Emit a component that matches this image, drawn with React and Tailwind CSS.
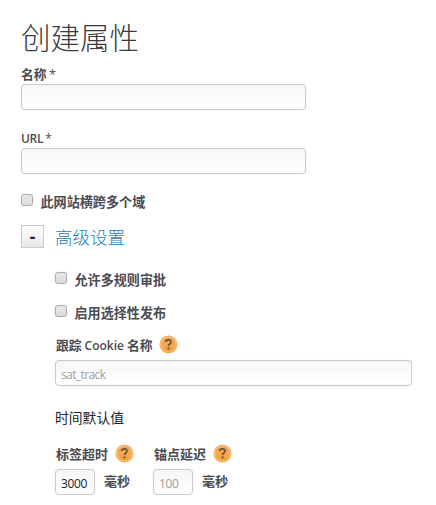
import React from 'react';

const field =
  'block h-[26px] rounded-[4px] border border-[#cbcbcb] bg-linear-to-b from-[#f6f6f6] to-white outline-none shadow-[0_0_1px_#d4d4d4] text-[12px] placeholder:text-[#a0a0a0] placeholder:opacity-100';

function Checkbox({ label, className = '' }) {
  return (
    <label className={`flex h-4 items-center ${className}`}>
      <input
        type="checkbox"
        className="size-3 appearance-none rounded-[3px] border border-[#adadad] bg-linear-to-b from-[#e8e8e8] to-[#dcdcdc] shadow-[0_0_1px_#b5b5b5]"
      />
      <span className="relative top-[2px] ml-[7.5px] text-[13.1px] leading-4 font-bold">{label}</span>
    </label>
  );
}

function Help() {
  return (
    <svg className="size-[19px] shrink-0" viewBox="0 0 19 19" role="img">
      <defs>
        <linearGradient id="amber" x1="0" y1="0" x2="0" y2="1">
          <stop offset="0" stopColor="#e9a257" />
          <stop offset="0.55" stopColor="#f3a850" />
          <stop offset="1" stopColor="#f59b28" />
        </linearGradient>
      </defs>
      <circle cx="9.5" cy="9.5" r="9" fill="url(#amber)" />
      <circle cx="9.5" cy="9.5" r="7.7" fill="none" stroke="#fbd196" strokeWidth="0.9" />
      <path d="M6.7 7C6.8 5.4 7.9 4.8 9.4 4.8c1.6 0 2.6.8 2.6 2.2 0 2-2.5 2-2.5 4.1" fill="none" stroke="#6b5134" strokeWidth="1.7" />
      <rect x="8.6" y="12.4" width="1.9" height="1.9" fill="#6b5134" />
    </svg>
  );
}

function TimeField({ label, value, placeholder }) {
  return (
    <div className="w-[98px]">
      <div className="flex h-[19px] items-center">
        <span className="ml-px w-[59px] whitespace-nowrap text-[13px] leading-4 font-bold">{label}</span>
        <Help />
      </div>
      <div className="mt-[6px] flex items-center">
        <input defaultValue={value} placeholder={placeholder} className={`${field} w-10 pt-[2px] pl-[5px] tracking-[-0.4px] text-[#222]`} />
        <span className="relative -top-px ml-[9px] text-[13px] leading-4 font-bold">毫秒</span>
      </div>
    </div>
  );
}

export default function App() {
  return (
    <main className="h-[505px] w-[436px] overflow-hidden bg-white pt-4 pl-[21px] font-['Open_Sans','Noto_Sans_CJK_SC',sans-serif] text-[#4b4b52]">
      <h1 className="h-10 whitespace-nowrap font-['Noto_Sans_CJK_SC',sans-serif] text-[29.5px] leading-10 font-light text-[#3c3c3c]">创建属性</h1>

      <div className="mt-[10px] h-4 text-[12.8px] leading-4 font-bold">
        名称<span className="ml-[2.5px] font-normal">*</span>
      </div>
      <input className={`${field} mt-[2px] w-[285px]`} />

      <div className="mt-[21px] h-4 text-[12px] leading-4 font-semibold tracking-[-0.3px]">
        URL<span className="ml-[2px] font-normal">*</span>
      </div>
      <input className={`${field} mt-px w-[285px]`} />

      <Checkbox label="此网站横跨多个域" className="mt-[18px]" />

      <div className="mt-[17px] flex h-[23px] items-center">
        <button className="flex size-[23px] items-center justify-center border border-[#cacaca] bg-linear-to-b from-white to-[#e8e8e8] font-['Liberation_Sans',sans-serif] text-[18px] leading-5 font-bold text-[#222]">
          -
        </button>
        <h2 className="ml-[11px] font-['Noto_Sans_CJK_SC',sans-serif] text-[17.5px] leading-6 font-light text-[#2080bb]">高级设置</h2>
      </div>

      <section className="ml-[34px]">
        <Checkbox label="允许多规则审批" className="mt-[22px]" />
        <Checkbox label="启用选择性发布" className="mt-[17px]" />

        <div className="mt-[16px] flex h-[19px] items-center">
          <span className="relative top-px ml-px w-[102.5px] whitespace-nowrap text-[12.8px] leading-4 font-bold">
            跟踪<span className="mx-[3px] text-[12px] font-semibold">Cookie</span>名称
          </span>
          <Help />
        </div>
        <input placeholder="sat_track" className={`${field} mt-[6px] w-[357px] pt-[2px] pl-[5px] tracking-[-0.6px]`} />

        <h3 className="mt-[22px] h-5 text-[13.8px] leading-5 font-normal text-[#222]">时间默认值</h3>

        <div className="mt-[16px] flex">
          <TimeField label="标签超时" value="3000" />
          <TimeField label="锚点延迟" placeholder="100" />
        </div>
      </section>
    </main>
  );
}
